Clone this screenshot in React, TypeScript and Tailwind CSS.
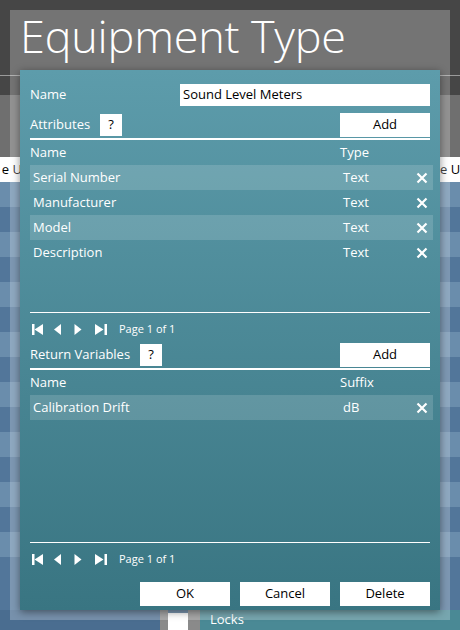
import type { ReactNode } from "react";

const font = { fontFamily: '"Open Sans", "Noto Sans", sans-serif' };

function RemoveIcon() {
  return (
    <svg width="12" height="12" viewBox="0 0 12 12" className="shrink-0">
      <path d="M1.5 1.5 L10.5 10.5 M10.5 1.5 L1.5 10.5" stroke="white" strokeWidth="2.2" />
    </svg>
  );
}

function Pager() {
  return (
    <div className="flex h-[22px] items-center pl-[2px] text-[11px] text-white">
      <svg width="12" height="11" viewBox="0 0 12 11" className="mr-[10px]">
        <rect x="0" y="0" width="2.5" height="11" fill="white" />
        <path d="M11 0 L2.5 5.5 L11 11 Z" fill="white" />
      </svg>
      <svg width="8" height="11" viewBox="0 0 8 11" className="mr-[12px]">
        <path d="M7 0 L0 5.5 L7 11 Z" fill="white" />
      </svg>
      <svg width="8" height="11" viewBox="0 0 8 11" className="mr-[13px]">
        <path d="M0.5 0 L7.5 5.5 L0.5 11 Z" fill="white" />
      </svg>
      <svg width="12" height="11" viewBox="0 0 12 11" className="mr-[12px]">
        <path d="M0 0 L8.5 5.5 L0 11 Z" fill="white" />
        <rect x="9.5" y="0" width="2.5" height="11" fill="white" />
      </svg>
      <span>Page 1 of 1</span>
    </div>
  );
}

function WhiteButton({ children, className = "" }: { children: ReactNode; className?: string }) {
  return (
    <div className={`flex h-[24px] w-[90px] items-center justify-center bg-white text-[13px] text-black ${className}`}>
      {children}
    </div>
  );
}

function SectionHeader({ label }: { label: string }) {
  return (
    <div className="flex h-[24px] items-center">
      <span className="text-[13px] text-white">{label}</span>
      <div className="ml-[10px] flex h-[22px] w-[22px] items-center justify-center bg-white text-[13px] text-black">?</div>
      <WhiteButton className="ml-auto">Add</WhiteButton>
    </div>
  );
}

function Table({ col, rows }: { col: string; rows: [string, string][] }) {
  return (
    <div>
      <div className="mt-[1px] h-[2px] bg-white" />
      <div className="flex h-[25px] items-center text-[13px] text-white">
        <span className="w-[310px]">Name</span>
        <span>{col}</span>
      </div>
      <div className="h-[147px] w-[403px]">
        {rows.map(([name, kind], i) => (
          <div
            key={name}
            className={`flex h-[25px] items-center pl-[3px] pr-[5px] text-[13px] text-white ${i % 2 === 0 ? "bg-white/15" : ""}`}
          >
            <span className="w-[310px]">{name}</span>
            <span>{kind}</span>
            <span className="ml-auto">
              <RemoveIcon />
            </span>
          </div>
        ))}
      </div>
      <div className="h-px bg-white" />
    </div>
  );
}

function BackRow({ light }: { light: boolean }) {
  return <div className={`h-[25px] ${light ? "bg-[#6a8dac]" : "bg-[#52769a]"}`} />;
}

export default function App() {
  return (
    <div className="relative h-[630px] w-[460px] overflow-hidden bg-[#52769a]" style={font}>
      {/* page behind the modal */}
      <div className="h-[75px] bg-[#464646]" />
      <div className="h-px bg-[#9a9a9a]" />
      <div className="h-[19px] bg-[#464646]" />
      <div className="h-[62px] bg-[#6f6f6f]" />
      <div className="flex h-[25px] justify-between bg-[#6f6f6f] text-[13px] text-black">
        <div className="flex w-[22px] items-center justify-end overflow-hidden whitespace-nowrap bg-white">e U</div>
        <div className="flex w-[22px] items-center overflow-hidden whitespace-nowrap bg-white pl-[2px]">e U</div>
      </div>
      {[true, false, true, false, true, false, true, false, true, false, true, false, true, false, true, false].map((l, i) => (
        <BackRow key={i} light={l} />
      ))}
      <div className="absolute bottom-0 left-0 flex h-[20px] w-full items-end">
        <div className="h-full w-[160px] bg-[#4a6d90]" />
        <div className="h-full w-[8px] bg-[#8a8a8a]" />
        <div className="h-[17px] w-[20px] bg-white" />
        <div className="h-full w-[12px] bg-[#8a8a8a]" />
        <div className="flex h-full flex-1 items-center bg-[#4a8995] pl-[10px] text-[13px] text-white">Locks</div>
      </div>

      {/* modal overlay */}
      <div className="absolute left-[10px] top-[10px] h-[610px] w-[440px] bg-white/25">
        <div className="pl-[10px] text-[45px] font-light leading-[52px] tracking-[-0.2px] text-white">
          Equipment Type
        </div>
      </div>

      {/* dialog */}
      <div className="absolute left-[20px] top-[70px] flex h-[540px] w-[420px] flex-col bg-gradient-to-b from-[#5d9cab] to-[#397582] px-[10px] pt-[14px] shadow-[0_2px_8px_rgba(0,0,0,0.45)]">
        <div className="flex h-[22px] items-center">
          <span className="text-[13px] text-white">Name</span>
          <div className="ml-auto flex h-[22px] w-[250px] items-center bg-white pl-[3px] text-[13px] text-black">
            Sound Level Meters
          </div>
        </div>
        <div className="mt-[7px]">
          <SectionHeader label="Attributes" />
        </div>
        <Table
          col="Type"
          rows={[
            ["Serial Number", "Text"],
            ["Manufacturer", "Text"],
            ["Model", "Text"],
            ["Description", "Text"],
          ]}
        />
        <div className="mt-[5px]">
          <Pager />
        </div>
        <div className="mt-[3px]">
          <SectionHeader label="Return Variables" />
        </div>
        <Table col="Suffix" rows={[["Calibration Drift", "dB"]]} />
        <div className="mt-[5px]">
          <Pager />
        </div>
        <div className="mt-[12px] flex justify-end gap-[10px]">
          <WhiteButton>OK</WhiteButton>
          <WhiteButton>Cancel</WhiteButton>
          <WhiteButton>Delete</WhiteButton>
        </div>
      </div>
    </div>
  );
}
